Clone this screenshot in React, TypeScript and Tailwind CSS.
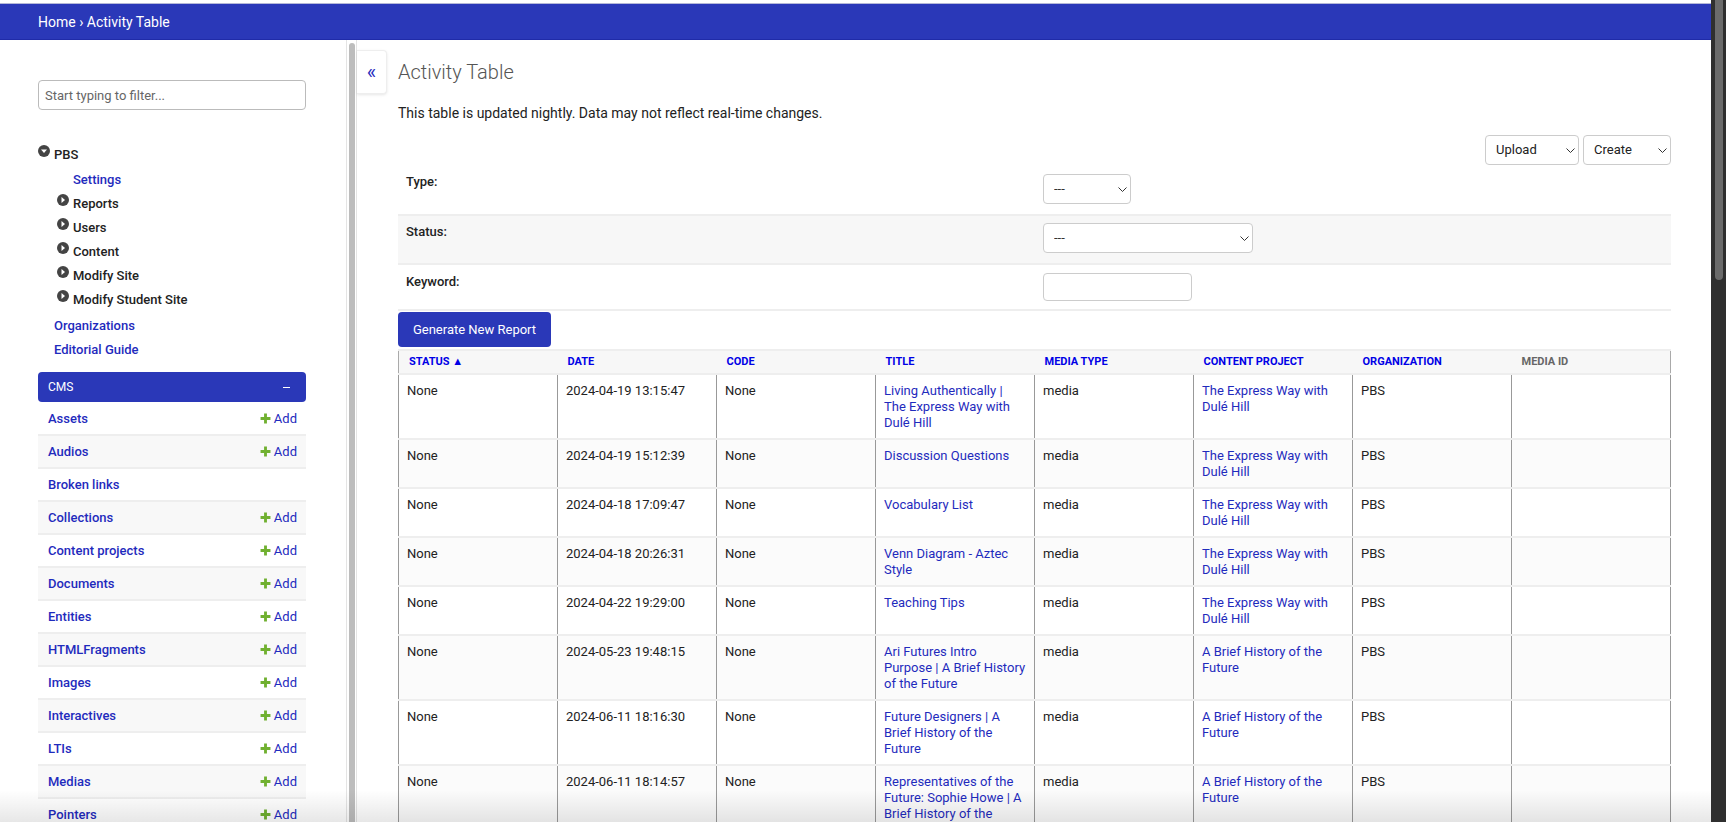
const navItems = ["Reports", "Users", "Content", "Modify Site", "Modify Student Site"];

const cmsItems = [
  { name: "Assets", add: true },
  { name: "Audios", add: true },
  { name: "Broken links", add: false },
  { name: "Collections", add: true },
  { name: "Content projects", add: true },
  { name: "Documents", add: true },
  { name: "Entities", add: true },
  { name: "HTMLFragments", add: true },
  { name: "Images", add: true },
  { name: "Interactives", add: true },
  { name: "LTIs", add: true },
  { name: "Medias", add: true },
  { name: "Pointers", add: true },
];

const columns = ["Status ▲", "Date", "Code", "Title", "Media type", "Content project", "Organization", "Media ID"];

const express = "The Express Way with Dulé Hill";
const future = "A Brief History of the Future";

const rows = [
  { date: "2024-04-19 13:15:47", title: "Living Authentically | The Express Way with Dulé Hill", project: express },
  { date: "2024-04-19 15:12:39", title: "Discussion Questions", project: express },
  { date: "2024-04-18 17:09:47", title: "Vocabulary List", project: express },
  { date: "2024-04-18 20:26:31", title: "Venn Diagram - Aztec Style", project: express },
  { date: "2024-04-22 19:29:00", title: "Teaching Tips", project: express },
  { date: "2024-05-23 19:48:15", title: "Ari Futures Intro Purpose | A Brief History of the Future", project: future },
  { date: "2024-06-11 18:16:30", title: "Future Designers | A Brief History of the Future", project: future },
  { date: "2024-06-11 18:14:57", title: "Representatives of the Future: Sophie Howe | A Brief History of the Future", project: future },
];

const CircleArrow = ({ down }: { down?: boolean }) => (
  <svg viewBox="0 0 12 12" className="w-3 h-3 shrink-0">
    <circle cx="6" cy="6" r="6" fill="#444" />
    <path d={down ? "M3 4.5h6L6 8z" : "M4.5 3v6L8 6z"} fill="#fff" />
  </svg>
);

const Plus = () => (
  <svg viewBox="0 0 10 10" className="w-[11px] h-[11px]">
    <path d="M5 0.5v9M0.5 5h9" stroke="#70b030" strokeWidth="2.6" />
  </svg>
);

const Select = ({ label, className, textColor }: { label: string; className: string; textColor: string }) => (
  <div className={`relative h-[30px] ${className}`}>
    <select className={`appearance-none w-full h-full border border-[#ccc] rounded-[4px] bg-white pl-[10px] text-[13px] ${textColor}`}>
      <option>{label}</option>
    </select>
    <svg viewBox="0 0 9 5" className="absolute right-[4px] top-[13px] w-[9px] h-[5px] pointer-events-none">
      <path d="M0.5 0.5 4.5 4.5 8.5 0.5" fill="none" stroke="#333" strokeWidth="1" />
    </svg>
  </div>
);

const Sidebar = () => (
  <aside className="w-[346px] shrink-0 pl-[38px] pr-[40px] pt-10">
    <input
      placeholder="Start typing to filter..."
      className="w-full h-[30px] border border-[#bbb] rounded-[4px] px-[6px] text-[13px] text-[#333] placeholder:text-[#666]"
    />
    <div className="mt-[35px] flex items-start gap-1 h-[25px]">
      <CircleArrow down />
      <span className="font-medium text-[13px] leading-4 text-[#222] mt-[2px]">PBS</span>
    </div>
    <div className="pl-[19px]">
      <div className="pl-4 h-6 font-medium text-[13px] leading-4 text-[#1f2bbd] pt-[2px]">Settings</div>
      {navItems.map((item) => (
        <div key={item} className="flex items-start gap-1 h-[24px]">
          <CircleArrow />
          <span className="font-medium text-[13px] leading-4 text-[#222] mt-[2px]">{item}</span>
        </div>
      ))}
    </div>
    <div className="pl-4 font-medium text-[13px] leading-4 text-[#1f2bbd] mt-[4px] h-6">Organizations</div>
    <div className="pl-4 font-medium text-[13px] leading-4 text-[#1f2bbd] h-6">Editorial Guide</div>
    <div className="mt-[6px] h-[30px] bg-[#2a38b8] rounded-[4px] flex items-center justify-between pl-[10px] pr-4 text-white text-[12px]">
      <span>CMS</span>
      <span className="w-[7px] h-px bg-white" />
    </div>
    <div className="pt-px">
      {cmsItems.map((item, i) => (
        <div
          key={item.name}
          className={`h-[33px] border-b-2 border-[#eeeeee] flex items-center justify-between pl-[10px] pr-[9px] text-[13px] text-[#1f2bbd] ${
            i % 2 === 1 ? "bg-[#f8f8f8]" : "bg-white"
          }`}
        >
          <span className="font-medium">{item.name}</span>
          {item.add && (
            <span className="flex items-center gap-[3px]">
              <Plus />
              Add
            </span>
          )}
        </div>
      ))}
    </div>
  </aside>
);

const FormRow = ({ label, shade, height, labelPad, children }: { label: string; shade?: boolean; height: string; labelPad: string; children: React.ReactNode }) => (
  <div className={`flex border-b-2 border-[#eeeeee] ${height} ${shade ? "bg-[#f7f7f7]" : "bg-white"}`}>
    <div className={`w-[645px] pl-2 font-medium text-[13px] leading-4 text-[#222] ${labelPad}`}>{label}</div>
    <div className="pt-[8px]">{children}</div>
  </div>
);

const App = () => (
  <div className="relative h-[822px] overflow-hidden flex bg-white font-['Roboto',sans-serif]">
    <div className="flex-1 min-w-0 flex flex-col">
      <div className="h-1 border-b border-[#b5b8d8] bg-white" />
      <header className="h-9 bg-[#2a38b8] border-b border-[#1f2ba8] flex items-center pl-[38px] text-white text-sm">
        Home › Activity Table
      </header>
      <div className="flex-1 min-h-0 flex">
        <Sidebar />
        <div className="w-[11px] shrink-0 border-x border-[#e4e4e4] bg-white flex justify-center pt-[3px]">
          <div className="w-[6px] h-full bg-[#bdbdbd] rounded-t-[3px]" />
        </div>
        <main className="flex-1 min-w-0 flex">
          <button className="w-[30px] h-[44px] mt-[10px] shrink-0 bg-white rounded-r-[4px] border-y border-r border-[#eee] shadow-[0_1px_3px_rgba(0,0,0,0.1)] text-[#1f2bbd] text-xl leading-none">
            «
          </button>
          <div className="ml-[11px] w-[1273px] shrink-0">
            <h1 className="mt-[19px] text-xl leading-[26px] font-light text-[#555]">Activity Table</h1>
            <p className="mt-[18px] text-sm leading-5 text-[#222]">
              This table is updated nightly. Data may not reflect real-time changes.
            </p>
            <div className="mt-[12px] flex justify-end gap-1">
              <Select label="Upload" className="w-[94px]" textColor="text-[#222]" />
              <Select label="Create" className="w-[88px]" textColor="text-[#222]" />
            </div>
            <div className="flex border-b-2 border-[#eeeeee] h-[51px] bg-white">
              <div className="w-[645px] pl-2 pt-[9px] font-medium text-[13px] leading-4 text-[#222]">Type:</div>
              <div className="pt-[9px]">
                <Select label="---" className="w-[88px]" textColor="text-[#333]" />
              </div>
            </div>
            <FormRow label="Status:" shade height="h-[49px]" labelPad="pt-[8px]">
              <Select label="---" className="w-[210px] -mt-px" textColor="text-[#333]" />
            </FormRow>
            <FormRow label="Keyword:" height="h-[46px]" labelPad="pt-[9px]">
              <input className="w-[149px] h-[28px] border border-[#ccc] rounded-[4px] bg-white" />
            </FormRow>
            <button className="mt-[1px] h-[35px] w-[153px] bg-[#2a38b8] rounded-[4px] text-white text-[13px]">
              Generate New Report
            </button>
            <table className="mt-[2px] w-full table-fixed border-collapse text-[13px] leading-4">
              <thead>
                <tr className="bg-[#f7f7f7] h-[24px] border-y-2 border-[#eeeeee]">
                  {columns.map((c, i) => (
                    <th
                      key={c}
                      className={`text-left align-middle pl-[10px] text-[11px] font-bold uppercase border-[#aaa] ${
                        i === 0 ? "border-l" : ""
                      } ${i === 7 ? "border-r text-[#666]" : "text-[#0000e6]"}`}
                    >
                      {c}
                    </th>
                  ))}
                </tr>
              </thead>
              <tbody>
                {rows.map((r, i) => (
                  <tr key={r.date} className={`border-b-2 border-[#eeeeee] ${i % 2 === 1 ? "bg-[#fbfbfb]" : "bg-white"}`}>
                    <td className="align-top px-2 pt-2 pb-[7px] border-x border-x-[#999] text-[#222]">None</td>
                    <td className="align-top px-2 pt-2 pb-[7px] border-x border-x-[#999] text-[#222]">{r.date}</td>
                    <td className="align-top px-2 pt-2 pb-[7px] border-x border-x-[#999] text-[#222]">None</td>
                    <td className="align-top px-2 pt-2 pb-[7px] border-x border-x-[#999] text-[#1f2bbd]">{r.title}</td>
                    <td className="align-top px-2 pt-2 pb-[7px] border-x border-x-[#999] text-[#222]">media</td>
                    <td className="align-top px-2 pt-2 pb-[7px] border-x border-x-[#999] text-[#1f2bbd]">{r.project}</td>
                    <td className="align-top px-2 pt-2 pb-[7px] border-x border-x-[#999] text-[#222]">PBS</td>
                    <td className="align-top px-2 pt-2 pb-[7px] border-x border-x-[#999]" />
                  </tr>
                ))}
              </tbody>
            </table>
          </div>
        </main>
      </div>
    </div>
    <div className="w-[15px] shrink-0 bg-[#2f2f2f] flex justify-center pl-[1px]">
      <div className="w-2 h-[280px] bg-[#6b6b6b] rounded-b-[4px]" />
    </div>
    <div className="absolute left-0 right-[15px] bottom-0 h-[32px] bg-gradient-to-b from-transparent to-[#00000018] pointer-events-none" />
  </div>
);

export default App;
